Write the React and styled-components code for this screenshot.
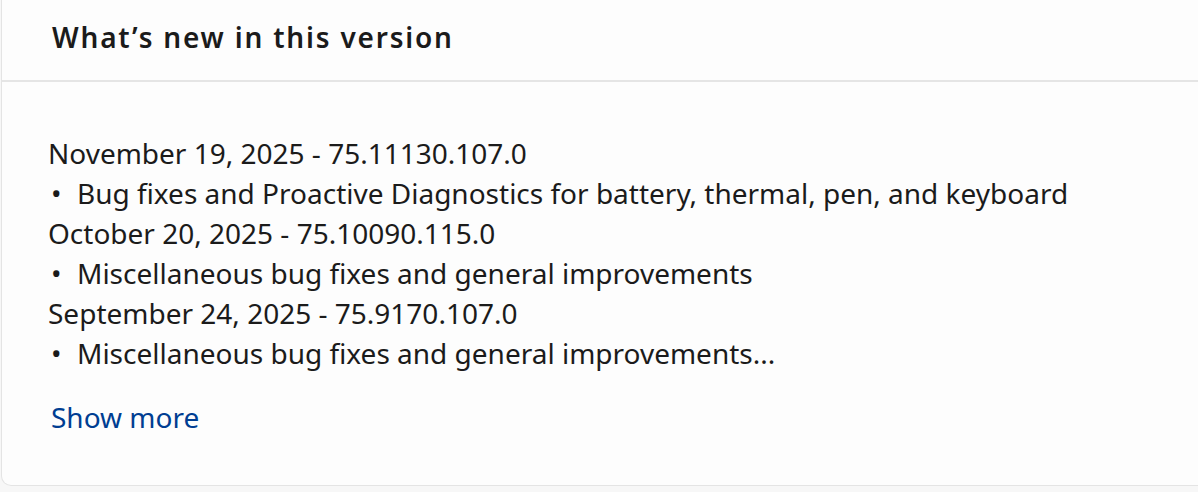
import React from "react";
import styled, { createGlobalStyle } from "styled-components";

const Global = createGlobalStyle`
  html, body { margin: 0; padding: 0; background: #f7f7f7; }
  body { font-family: "Noto Sans", "Open Sans", sans-serif; overflow: hidden; }
`;

const Page = styled.div`
  width: 1198px;
  height: 492px;
  padding-left: 1px;
  box-sizing: border-box;
  overflow: hidden;
`;

const Card = styled.section`
  width: 1230px;
  height: 486px;
  box-sizing: border-box;
  background: #fdfdfd;
  border: 1px solid #e4e4e4;
  border-top: none;
  border-radius: 0 0 10px 10px;
  display: flex;
  flex-direction: column;
`;

const Header = styled.header`
  height: 82px;
  box-sizing: border-box;
  border-bottom: 2px solid #e5e5e5;
  display: flex;
  align-items: center;
  padding-left: 50px;
  padding-bottom: 7px;
`;

const Title = styled.h2`
  margin: 0;
  font-size: 28px;
  font-weight: 600;
  color: #1b1b1b;
  letter-spacing: 1.8px;
`;

const Body = styled.div`
  padding: 51px 0 0 46px;
  display: flex;
  flex-direction: column;
`;

const Line = styled.div`
  font-size: 28px;
  line-height: 40px;
  color: #1b1b1b;
  white-space: pre;
`;

const Bullet = styled.span`
  display: inline-block;
  width: 29px;
  padding-left: 3px;
  box-sizing: border-box;
`;

const ShowMore = styled.a`
  margin-top: 24px;
  font-size: 28px;
  line-height: 40px;
  color: #003e92;
  text-decoration: none;
  padding-left: 3px;
  cursor: pointer;
`;

const entries = [
  { head: "November 19, 2025 - 75.11130.107.0", note: "Bug fixes and Proactive Diagnostics for battery, thermal, pen, and keyboard" },
  { head: "October 20, 2025 - 75.10090.115.0", note: "Miscellaneous bug fixes and general improvements" },
  { head: "September 24, 2025 - 75.9170.107.0", note: "Miscellaneous bug fixes and general improvements..." },
];

export default function App() {
  return (
    <Page>
      <Global />
      <Card>
        <Header>
          <Title>What’s new in this version</Title>
        </Header>
        <Body>
          {entries.map((e) => (
            <React.Fragment key={e.head}>
              <Line>{e.head}</Line>
              <Line>
                <Bullet>•</Bullet>
                {e.note}
              </Line>
            </React.Fragment>
          ))}
          <ShowMore>Show more</ShowMore>
        </Body>
      </Card>
    </Page>
  );
}
